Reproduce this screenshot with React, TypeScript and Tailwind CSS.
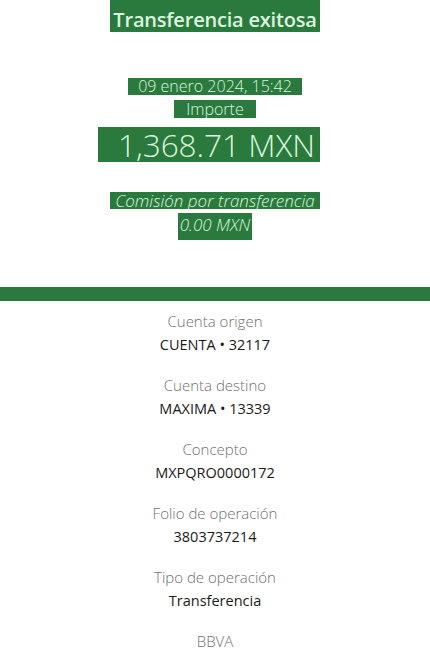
import React from 'react';

const detalles = [
  { label: 'Cuenta origen', value: 'CUENTA • 32117' },
  { label: 'Cuenta destino', value: 'MAXIMA • 13339' },
  { label: 'Concepto', value: 'MXPQRO0000172' },
  { label: 'Folio de operación', value: '3803737214' },
  { label: 'Tipo de operación', value: 'Transferencia' },
];

export default function App() {
  return (
    <div className="w-[430px] h-[661px] overflow-hidden bg-white font-['Open_Sans',sans-serif]">
      {/* Encabezado */}
      <div className="flex flex-col items-center h-[287px] text-[#dcf5de]">
        <div className="h-[32px] px-[3px] pt-[8px] bg-[#2a7a3e] text-[20px] font-semibold leading-[24px] tracking-[-0.2px]">
          Transferencia exitosa
        </div>
        <div className="mt-[46px] h-[17px] px-[10px] bg-[#2a7a3e] text-[16px] font-light leading-[17px]">
          09 enero 2024, 15:42
        </div>
        <div className="mt-[5px] h-[18px] px-[12px] bg-[#2a7a3e] text-[16px] font-light leading-[18px]">
          Importe
        </div>
        <div className="mt-[9px] mr-[12px] h-[35px] pl-[20px] pr-[5px] bg-[#2a7a3e] text-[31.5px] font-light leading-[35px]">
          1,368.71 MXN
        </div>
        <div className="mt-[30px] h-[17px] px-[5px] bg-[#2a7a3e] text-[17px] font-light italic leading-[17px]">
          Comisión por transferencia
        </div>
        <div className="mt-[4px] h-[27px] px-[2px] pt-[3px] bg-[#2a7a3e] text-[17px] font-light italic leading-[17px]">
          0.00 MXN
        </div>
      </div>

      <div className="h-[14px] bg-[#2a7a3e]" />

      {/* Detalle */}
      <div className="flex flex-col items-center gap-[16px] pt-[8px]">
        {detalles.map((d) => (
          <div key={d.label} className="flex flex-col items-center">
            <p className="text-[15px] font-light leading-[24px] text-[#6f6f6f]">{d.label}</p>
            <p className="text-[14.5px] leading-[24px] text-[#1a1a1a]">{d.value}</p>
          </div>
        ))}
        <p className="text-[15px] font-light leading-[24px] text-[#6f6f6f]">BBVA</p>
      </div>
    </div>
  );
}
